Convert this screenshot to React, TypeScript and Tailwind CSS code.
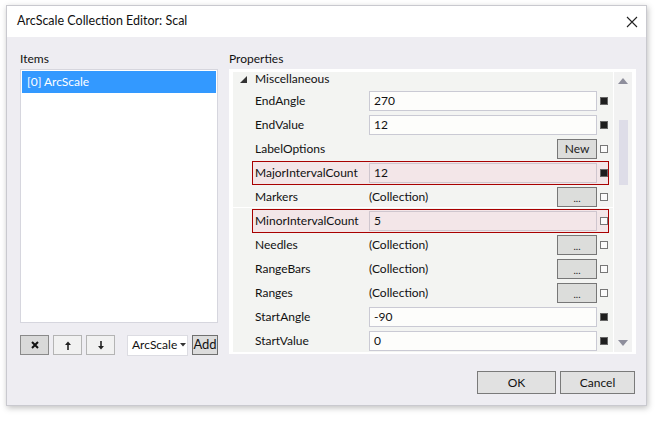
import React from 'react'

type Row = {
  name: string
  value?: string
  kind: 'input' | 'collection' | 'new' | 'label'
  filled: boolean
  highlight?: boolean
}

const rows: Row[] = [
  { name: 'EndAngle', value: '270', kind: 'input', filled: true },
  { name: 'EndValue', value: '12', kind: 'input', filled: true },
  { name: 'LabelOptions', kind: 'new', filled: false },
  { name: 'MajorIntervalCount', value: '12', kind: 'input', filled: true, highlight: true },
  { name: 'Markers', kind: 'collection', filled: false },
  { name: 'MinorIntervalCount', value: '5', kind: 'input', filled: false, highlight: true },
  { name: 'Needles', kind: 'collection', filled: false },
  { name: 'RangeBars', kind: 'collection', filled: false },
  { name: 'Ranges', kind: 'collection', filled: false },
  { name: 'StartAngle', value: '-90', kind: 'input', filled: true },
  { name: 'StartValue', value: '0', kind: 'input', filled: true },
]

function Square({ filled }: { filled: boolean }) {
  return filled ? (
    <div className="w-[8px] h-[8px] border border-[#666] bg-[#1e1e1e]" />
  ) : (
    <div className="w-[8px] h-[8px] border border-[#777] bg-[#fbfbfb]" />
  )
}

function SmallButton({ children }: { children: React.ReactNode }) {
  return (
    <div className="w-[40px] h-[20px] border border-[#777] bg-[#dcdddb] flex items-center justify-center text-[12px] text-[#222]">
      {children}
    </div>
  )
}

function PropRow({ row }: { row: Row }) {
  const hl = row.highlight
  return (
    <div className="h-[24px] flex items-center">
      <div
        className={`ml-[19px] w-[357px] h-[24px] flex items-center border ${
          hl ? 'border-[#a80000] bg-[#f3e6e8]' : 'border-transparent'
        }`}
      >
        <div className="w-[116px] pl-[2px] text-[#111] whitespace-nowrap">{row.name}</div>
        <div className="w-[228px] h-[20px] flex items-center">
          {row.kind === 'input' && (
            <div
              className={`w-full h-[20px] border px-[4px] flex items-center ${
                hl ? 'border-[#cfc6ce] bg-[#f3e6e8]' : 'border-[#cacad4] bg-[#fdfdfb]'
              }`}
            >
              {row.value}
            </div>
          )}
          {row.kind === 'collection' && (
            <div className="w-full flex items-center justify-between">
              <span>(Collection)</span>
              <SmallButton>
                <span className="text-[10px] leading-none mt-[2px]">...</span>
              </SmallButton>
            </div>
          )}
          {row.kind === 'new' && (
            <div className="w-full flex items-center justify-end">
              <SmallButton>New</SmallButton>
            </div>
          )}
        </div>
        <div className="ml-[3px]">
          <Square filled={row.filled} />
        </div>
      </div>
    </div>
  )
}

export default function App() {
  return (
    <div className="w-[661px] h-[421px] bg-white pt-[5px] pl-[6px] font-['Lato','Liberation_Sans',sans-serif] text-[12px] text-[#111]">
      <div className="w-[641px] h-[401px] flex flex-col border border-[#c9c9cf] shadow-[1px_2px_6px_rgba(0,0,0,0.25)]">
        {/* Title bar */}
        <div className="h-[31px] bg-white flex items-center justify-between pl-[10px] pr-[8px]">
          <span className="text-[12.5px] text-[#111]">ArcScale Collection Editor: Scal</span>
          <svg width="12" height="12" viewBox="0 0 12 12">
            <path d="M1 1 L11 11 M11 1 L1 11" stroke="#222" strokeWidth="1.1" />
          </svg>
        </div>

        {/* Body */}
        <div className="flex-1 bg-[#eeedf2] pl-[13px] pr-[10px] pt-[12px] flex flex-col">
          <div className="flex gap-[11px] h-[306px]">
            {/* Items */}
            <div className="w-[198px] flex flex-col">
              <div className="h-[20px] flex items-center">Items</div>
              <div className="h-[254px] bg-white border border-[#d6d6de] p-[1px]">
                <div className="h-[22px] bg-[#3399ff] text-white flex items-center pl-[5px]">[0] ArcScale</div>
              </div>
              <div className="mt-[12px] flex items-center h-[20px]">
                <div className="w-[29px] h-[20px] border border-[#8a8a8a] bg-[#d9d9d9] flex items-center justify-center">
                  <svg width="8" height="8" viewBox="0 0 8 8">
                    <path d="M1 1 L7 7 M7 1 L1 7" stroke="#111" strokeWidth="2" />
                  </svg>
                </div>
                <div className="ml-[4px] w-[29px] h-[20px] border border-[#b4b4b4] bg-[#f1f1f1] flex items-center justify-center">
                  <svg width="6" height="9" viewBox="0 0 6 9">
                    <path d="M3 9 V2" stroke="#222" strokeWidth="1.6" />
                    <path d="M0 4 L3 0.5 L6 4 Z" fill="#222" />
                  </svg>
                </div>
                <div className="ml-[4px] w-[29px] h-[20px] border border-[#b4b4b4] bg-[#f1f1f1] flex items-center justify-center">
                  <svg width="6" height="9" viewBox="0 0 6 9">
                    <path d="M3 0 V7" stroke="#222" strokeWidth="1.6" />
                    <path d="M0 5 L3 8.5 L6 5 Z" fill="#222" />
                  </svg>
                </div>
                <div className="ml-[12px] w-[61px] h-[21px] border border-[#dcdce2] bg-white flex items-center pl-[4px] gap-[3px]">
                  <span>ArcScale</span>
                  <svg width="6" height="4" viewBox="0 0 6 4">
                    <path d="M0 0 L6 0 L3 3.5 Z" fill="#333" />
                  </svg>
                </div>
                <div className="ml-[4px] w-[26px] h-[20px] border border-[#707070] bg-[#dcdcdc] flex items-center justify-center text-[13px] text-[#111]">
                  Add
                </div>
              </div>
            </div>

            {/* Properties */}
            <div className="w-[407px] flex flex-col">
              <div className="h-[20px] flex items-center">Properties</div>
              <div className="h-[285px] bg-white pt-[3px] pl-[4px] flex">
                <div className="w-[380px] h-[280px] bg-[#f3f4f2] overflow-hidden">
                  <div className="h-[17px] pb-[3px] flex items-center">
                    <svg className="ml-[7px]" width="7" height="7" viewBox="0 0 7 7">
                      <path d="M7 0 L7 7 L0 7 Z" fill="#333" />
                    </svg>
                    <span className="ml-[8px] leading-[14px]">Miscellaneous</span>
                  </div>
                  {rows.map((r) => (
                    <React.Fragment key={r.name}>
                      <PropRow row={r} />
                      {r.name === 'Markers' && <div className="h-0 border-t border-white -mt-[2px] mb-[1px] relative" />}
                    </React.Fragment>
                  ))}
                </div>
                <div className="ml-[1px] w-[18px] h-[280px] bg-[#f2f2f2] flex flex-col items-center">
                  <svg className="mt-[6px]" width="10" height="6" viewBox="0 0 10 6">
                    <path d="M0 6 L5 0 L10 6 Z" fill="#8e8e9c" />
                  </svg>
                  <div className="mt-[36px] w-[9px] h-[65px] bg-[#dedde8]" />
                  <div className="flex-1" />
                  <svg className="mb-[6px]" width="10" height="6" viewBox="0 0 10 6">
                    <path d="M0 0 L10 0 L5 6 Z" fill="#8e8e9c" />
                  </svg>
                </div>
              </div>
            </div>
          </div>

          {/* Footer */}
          <div className="mt-[16px] flex justify-end gap-[4px] mr-[1px]">
            <div className="w-[79px] h-[23px] border border-[#7a7a7a] bg-[#e1e1e1] flex items-center justify-center">OK</div>
            <div className="w-[75px] h-[23px] border border-[#7a7a7a] bg-[#e1e1e1] flex items-center justify-center">Cancel</div>
          </div>
        </div>
      </div>
    </div>
  )
}
